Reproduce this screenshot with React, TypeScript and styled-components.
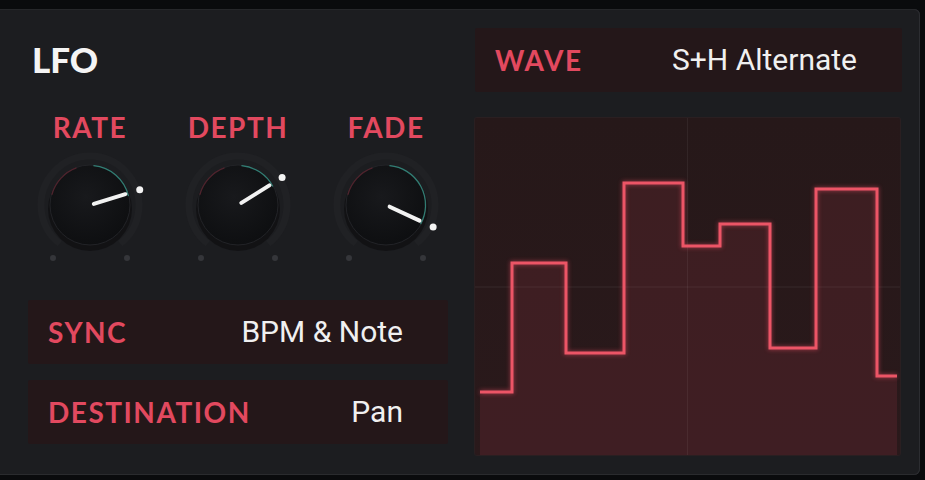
import styled, { createGlobalStyle } from 'styled-components'

const GlobalStyle = createGlobalStyle`
  html, body {
    margin: 0;
    padding: 0;
    background: #0a0b0d;
  }
  body {
    width: 925px;
    height: 480px;
    overflow: hidden;
  }
`

const RED = '#e2495f'
const TEAL = '#3fb3a3'

interface IKnob {
  label: string
  angle: number
}

const knobs: IKnob[] = [
  { label: 'RATE', angle: -17 },
  { label: 'DEPTH', angle: -32 },
  { label: 'FADE', angle: 25 },
]

const polar = (r: number, a: number) => {
  const rad = (a * Math.PI) / 180
  return [62 + r * Math.cos(rad), 60 + r * Math.sin(rad)]
}

const arcPath = (r: number, a0: number, a1: number) => {
  const [x0, y0] = polar(r, a0)
  const [x1, y1] = polar(r, a1)
  const large = a1 - a0 > 180 ? 1 : 0
  return `M ${x0} ${y0} A ${r} ${r} 0 ${large} 1 ${x1} ${y1}`
}

const KnobDial = ({ angle }: { angle: number }) => {
  const [lx0, ly0] = polar(4, angle)
  const [lx1, ly1] = polar(37, angle)
  const [dx, dy] = polar(52, angle)
  return (
    <svg width="124" height="120" viewBox="0 0 124 120">
      <defs>
        <radialGradient id="knobFill" cx="45%" cy="40%" r="65%">
          <stop offset="0%" stopColor="#18191c" />
          <stop offset="100%" stopColor="#0d0e10" />
        </radialGradient>
      </defs>
      <path d={arcPath(49, 128, 412)} stroke="#202124" strokeWidth="7" fill="none" />
      <circle cx="62" cy="64" r="42" fill="#0b0c0d" opacity="0.6" />
      <circle cx="62" cy="60" r="40" fill="url(#knobFill)" stroke="#222327" strokeWidth="1" />
      <path d={arcPath(39.5, 195, 250)} stroke="#5e2631" strokeWidth="1.2" fill="none" opacity="0.8" />
      <path d={arcPath(39.5, -85, angle + 4)} stroke={TEAL} strokeWidth="1.2" fill="none" opacity="0.65" />
      <line x1={lx0} y1={ly0} x2={lx1} y2={ly1} stroke="#f2f2f2" strokeWidth="4" strokeLinecap="round" />
      <circle cx={dx} cy={dy} r="3.5" fill="#f4f4f4" />
      <circle cx="25" cy="113" r="3" fill="#35363a" />
      <circle cx="99" cy="113" r="3" fill="#35363a" />
    </svg>
  )
}

const WaveChart = () => {
  const line = 'M5 274 H37 V145 H91 V235 H149 V65 H208 V128 H245 V106 H295 V230 H341 V71 H402 V258 H422'
  return (
    <svg width="425" height="337" viewBox="0 0 425 337">
      <defs>
        <filter id="glow" x="-10%" y="-10%" width="120%" height="120%">
          <feGaussianBlur stdDeviation="2" />
        </filter>
      </defs>
      <path d={`${line} V337 H5 Z`} fill="#e2495f" opacity="0.12" />
      <line x1="212.5" y1="0" x2="212.5" y2="337" stroke="#ffffff" strokeOpacity="0.06" />
      <line x1="0" y1="169" x2="425" y2="169" stroke="#ffffff" strokeOpacity="0.07" />
      <path d={line} stroke="#e2495f" strokeWidth="4" fill="none" opacity="0.5" filter="url(#glow)" />
      <path d={line} stroke="#ec5566" strokeWidth="3" fill="none" />
    </svg>
  )
}

export default function App() {
  return (
    <>
      <GlobalStyle />
      <Panel>
        <LeftColumn>
          <Title>LFO</Title>
          <KnobRow>
            {knobs.map((knob) => (
              <KnobUnit key={knob.label}>
                <Label>{knob.label}</Label>
                <KnobDial angle={knob.angle} />
              </KnobUnit>
            ))}
          </KnobRow>
          <Rows>
            <Row>
              <Label>SYNC</Label>
              <Value>BPM &amp; Note</Value>
            </Row>
            <Row>
              <Label>DESTINATION</Label>
              <Value>Pan</Value>
            </Row>
          </Rows>
        </LeftColumn>
        <RightColumn>
          <Row>
            <Label>WAVE</Label>
            <Value>S+H Alternate</Value>
          </Row>
          <Display>
            <WaveChart />
          </Display>
        </RightColumn>
      </Panel>
    </>
  )
}

const Panel = styled.div`
  box-sizing: border-box;
  width: 920px;
  height: 466px;
  margin-top: 9px;
  padding: 19px 18px 0 28px;
  display: flex;
  gap: 27px;
  background: #1c1d20;
  border-radius: 0 6px 6px 0;
  box-shadow: inset -1px 0 0 #2c2d31, inset 0 1px 0 #26272a,
    inset 0 -1px 0 #2a2b2e;
`
const LeftColumn = styled.div`
  width: 420px;
  display: flex;
  flex-direction: column;
`
const RightColumn = styled.div`
  width: 427px;
  display: flex;
  flex-direction: column;
  gap: 26px;
`
const Title = styled.h1`
  margin: 14px 0 0 4px;
  font-family: Lato, 'Open Sans', sans-serif;
  font-weight: 900;
  font-size: 35px;
  line-height: 35px;
  color: #f4f4f4;
`
const KnobRow = styled.div`
  display: flex;
  gap: 24px;
  margin-top: 36px;
`
const KnobUnit = styled.div`
  width: 124px;
  display: flex;
  flex-direction: column;
  align-items: center;
  gap: 4px;
`
const Label = styled.span`
  font-family: Lato, 'Open Sans', sans-serif;
  font-weight: 700;
  font-size: 28px;
  line-height: 28px;
  letter-spacing: 1.5px;
  color: ${RED};
`
const Value = styled.span`
  font-family: Roboto, 'Liberation Sans', sans-serif;
  font-size: 30px;
  line-height: 30px;
  color: #f0f0f0;
`
const Rows = styled.div`
  display: flex;
  flex-direction: column;
  gap: 16px;
  margin-top: 35px;
`
const Row = styled.div`
  box-sizing: border-box;
  height: 64px;
  padding: 0 45px 0 20px;
  display: flex;
  align-items: center;
  justify-content: space-between;
  background: #241719;
  border-radius: 2px;
`
const Display = styled.div`
  width: 425px;
  height: 337px;
  background: linear-gradient(180deg, #261819 0%, #2a191b 100%);
  box-shadow: 0 0 0 1px #2a1f21;
  border-radius: 2px;
  svg {
    display: block;
  }
`
